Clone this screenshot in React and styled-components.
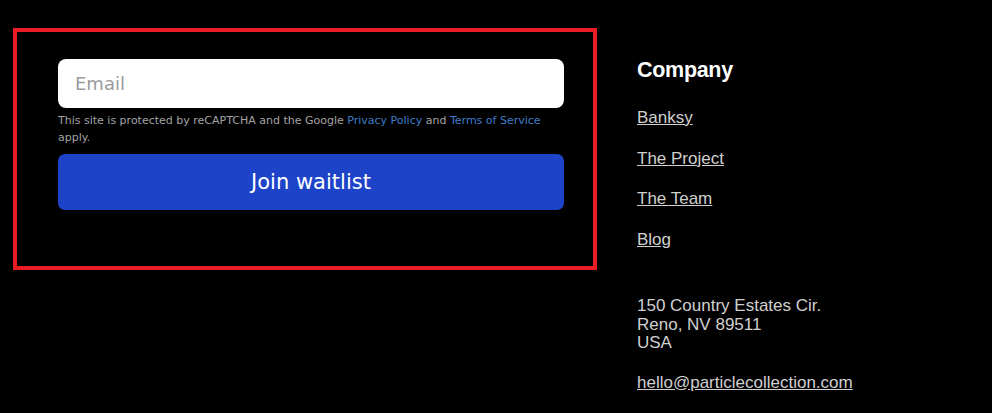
import React from 'react';
import styled, { createGlobalStyle } from 'styled-components';

// CSS //
const GlobalStyle = createGlobalStyle`
    html, body {
        margin: 0;
        padding: 0;
        background: #000;
    }
    * {
        box-sizing: border-box;
    }
`

const StyledFooter = styled.footer`
    display: flex;
    align-items: flex-start;
    gap: 40px;
    width: 992px;
    height: 413px;
    padding: 28px 0 0 13px;
    background-color: #000;
    overflow: hidden;
`

const SignupBox = styled.div`
    width: 584px;
    height: 242px;
    border: 4px solid #ec1c24;
    padding: 27px 0 0 41px;
`

const EmailInput = styled.input`
    display: block;
    width: 506px;
    height: 49px;
    border: none;
    border-radius: 8px;
    padding: 0 17px;
    background: #fff;
    font-family: "DejaVu Sans", Verdana, sans-serif;
    font-size: 18px;
    color: #222;
    outline: none;

    &::placeholder {
        color: #9b9b9b;
    }
`

const Notice = styled.p`
    width: 506px;
    margin: 4px 0 0;
    font-family: "DejaVu Sans", Verdana, sans-serif;
    font-size: 11px;
    line-height: 17px;
    color: #a3a3a3;

    a {
        color: #3f7dc8;
        text-decoration: none;
    }
`

const JoinButton = styled.button`
    display: block;
    width: 506px;
    height: 56px;
    margin-top: 8px;
    border: none;
    border-radius: 7px;
    background: #1d43c9;
    color: #fff;
    font-family: "DejaVu Sans", Verdana, sans-serif;
    font-size: 21px;
    cursor: pointer;
`

const Column = styled.div`
    display: flex;
    flex-direction: column;
    padding-top: 29px;
    font-family: "Liberation Sans", Arial, sans-serif;
    color: #d0d0d0;
`

const Heading = styled.h3`
    margin: 0 0 25px;
    font-size: 21.5px;
    font-weight: 700;
    line-height: 26px;
    letter-spacing: -0.3px;
    color: #fff;
`

const LinkList = styled.nav`
    display: flex;
    flex-direction: column;
    gap: 21px;

    a {
        font-size: 17px;
        line-height: 19.5px;
        color: #d0d0d0;
        text-decoration: underline;
        width: fit-content;
    }
`

const Address = styled.address`
    margin-top: 48px;
    font-style: normal;
    font-size: 17px;
    line-height: 18.5px;
`

const Mail = styled.a`
    margin-top: 21px;
    font-size: 17px;
    line-height: 18.5px;
    color: #d0d0d0;
    text-decoration: underline;
`

// COMPONENT //
const App = () => (
    <>
        <GlobalStyle />
        <StyledFooter>
            <SignupBox>
                <EmailInput type="email" placeholder="Email" />
                <Notice>
                    This site is protected by reCAPTCHA and the Google{' '}
                    <a href="#privacy">Privacy Policy</a> and{' '}
                    <a href="#terms">Terms of Service</a> apply.
                </Notice>
                <JoinButton>Join waitlist</JoinButton>
            </SignupBox>

            <Column>
                <Heading>Company</Heading>
                <LinkList>
                    <a href="#banksy">Banksy</a>
                    <a href="#project">The Project</a>
                    <a href="#team">The Team</a>
                    <a href="#blog">Blog</a>
                </LinkList>
                <Address>
                    150 Country Estates Cir.<br />
                    Reno, NV 89511<br />
                    USA
                </Address>
                <Mail href="mailto:hello@particlecollection.com">hello@particlecollection.com</Mail>
            </Column>
        </StyledFooter>
    </>
)

export default App;
